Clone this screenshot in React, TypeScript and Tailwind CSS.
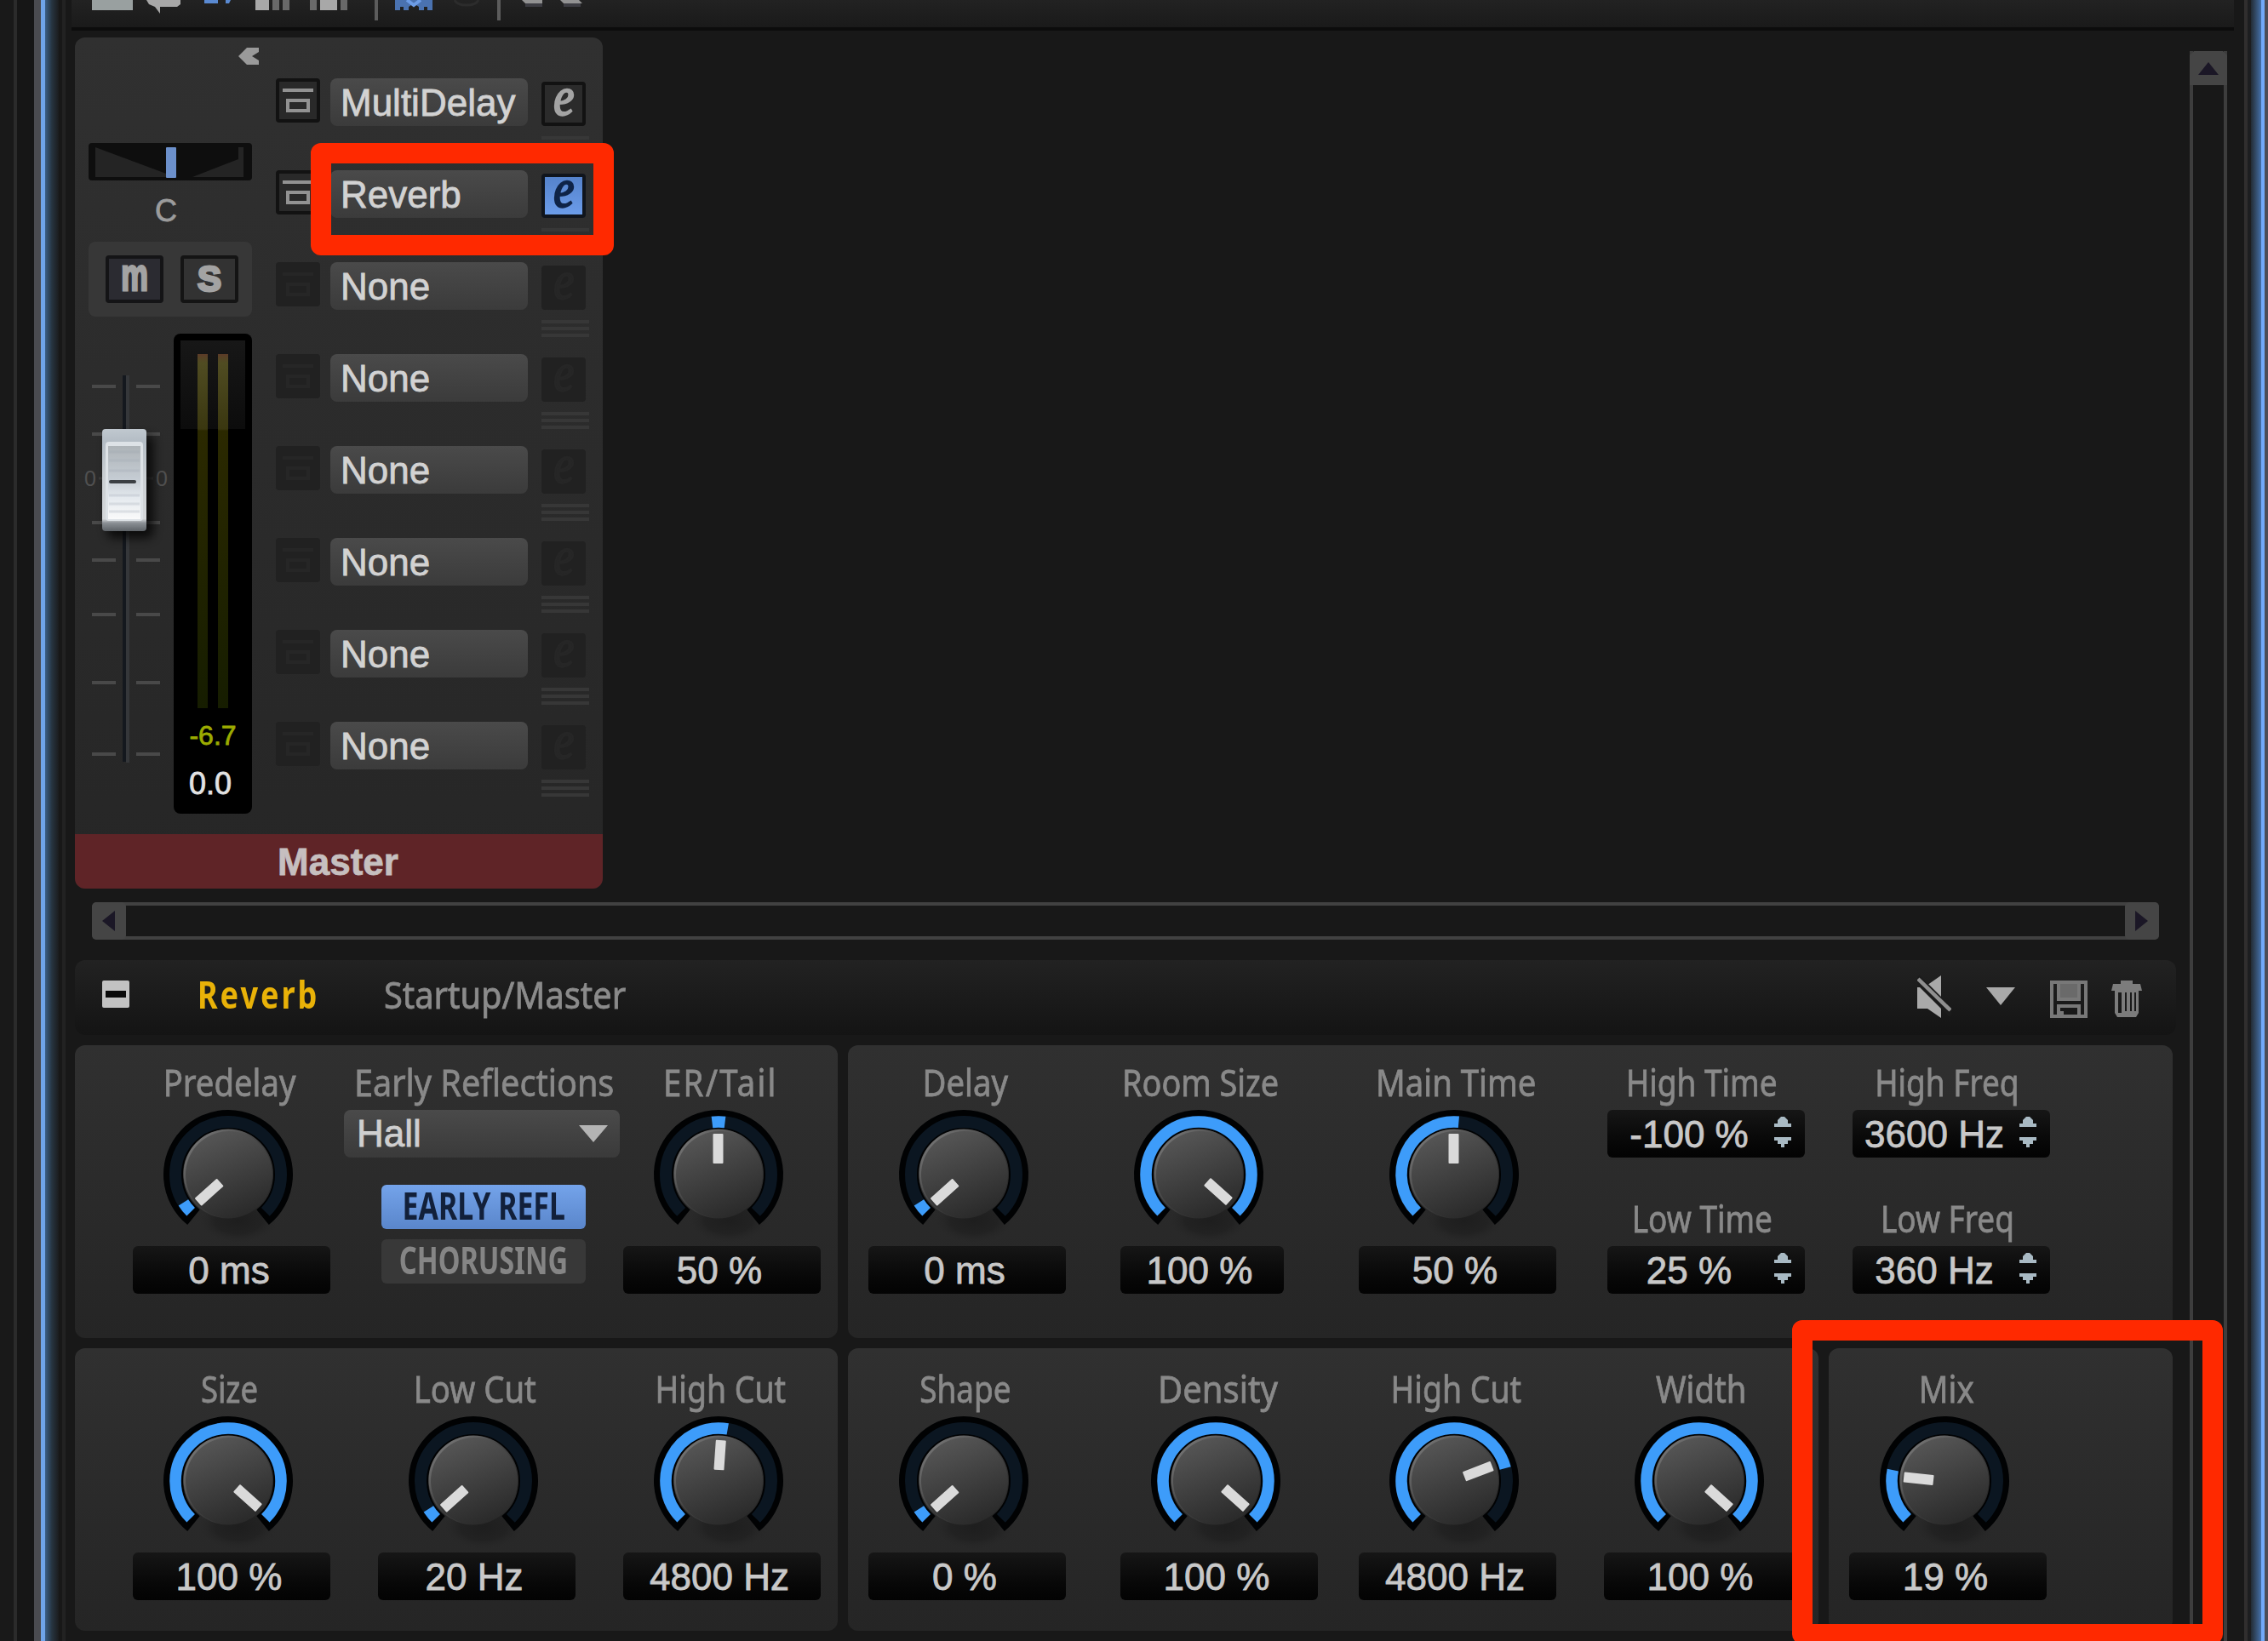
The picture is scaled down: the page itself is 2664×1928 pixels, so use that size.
import clsx from 'clsx'

type KnobProps = {
  angle: number
  from?: number
  to: number
}

const point = (radius: number, angle: number) => {
  const rad = (angle * Math.PI) / 180
  return `${(radius * Math.sin(rad)).toFixed(2)} ${(-radius * Math.cos(rad)).toFixed(2)}`
}

const arc = (radius: number, from: number, to: number) =>
  `M ${point(radius, from)} A ${radius} ${radius} 0 ${to - from > 180 ? 1 : 0} 1 ${point(radius, to)}`

function Knob({ angle, from = -135, to }: KnobProps) {
  return (
    <svg className="block h-[166px] w-[166px]" viewBox="-83 -82 166 166" fill="none">
      <ellipse cx="12" cy="54" rx="46" ry="26" fill="url(#knob-shadow)" />
      <path d={arc(64.5, -141, 141)} stroke="#010203" strokeWidth="23" />
      <path d={arc(62, -135, 135)} stroke="#0b1621" strokeWidth="14" />
      <path d={arc(62, from, to)} stroke="#3d9cfa" strokeWidth="13.5" />
      <circle cx="0" cy="-1" r="52.5" fill="url(#knob-rim)" />
      <circle cx="1" cy="0" r="51" fill="url(#knob-body)" />
      <rect x="-6.5" y="-48" width="12" height="35" rx="1" fill="#dadada" transform={`rotate(${angle})`} />
    </svg>
  )
}

function Defs() {
  return (
    <svg className="absolute h-0 w-0">
      <defs>
        <linearGradient id="knob-body" x1="0.2" y1="0" x2="0.6" y2="1">
          <stop offset="0" stopColor="#585858" />
          <stop offset="0.5" stopColor="#414141" />
          <stop offset="1" stopColor="#2a2a2a" />
        </linearGradient>
        <linearGradient id="knob-rim" x1="0.1" y1="0.1" x2="0.8" y2="0.8">
          <stop offset="0" stopColor="#777777" />
          <stop offset="0.5" stopColor="#444444" />
          <stop offset="1" stopColor="#282828" />
        </linearGradient>
        <radialGradient id="knob-shadow">
          <stop offset="0" stopColor="#1e1e1e" />
          <stop offset="0.6" stopColor="#222222" />
          <stop offset="1" stopColor="#272727" stopOpacity="0" />
        </radialGradient>
      </defs>
    </svg>
  )
}

type LabelProps = { children: string; className?: string; textClass?: string }

function Label({ children, className = 'pr-1', textClass = 'scale-x-[0.87]' }: LabelProps) {
  return (
    <div
      className={clsx(
        'flex h-[54px] items-center justify-center whitespace-pre font-["Noto_Sans",sans-serif] text-[44px] leading-[54px] text-[#898989] [-webkit-text-stroke:0.8px_currentColor]',
        className
      )}
    >
      <span className={textClass}>{children}</span>
    </div>
  )
}

function Value({ children }: { children: string }) {
  return (
    <div className="flex h-14 items-center justify-center rounded-md bg-linear-to-b from-[#161616] to-[#030303] pt-0.5 pr-1.5 text-[44px] leading-14 text-[#c8c8c8] [-webkit-text-stroke:0.8px_currentColor]">
      {children}
    </div>
  )
}

type ControlProps = KnobProps & { label: string; value: string; narrow?: boolean; textClass?: string }

function Control({ label, value, narrow, textClass, ...knob }: ControlProps) {
  return (
    <div className={clsx('shrink-0', narrow ? 'w-48' : 'w-58')}>
      <Label textClass={textClass}>{label}</Label>
      <div className="flex justify-center pr-2">
        <Knob {...knob} />
      </div>
      <Value>{value}</Value>
    </div>
  )
}

function SpinField({ label, value }: { label: string; value: string }) {
  return (
    <div>
      <Label className="pr-2.5" textClass="scale-x-[0.84]">
        {label}
      </Label>
      <div className="mt-1.5 flex h-14 rounded-md bg-linear-to-b from-[#161616] to-[#030303] text-[44px] leading-[58px] text-[#c8c8c8] [-webkit-text-stroke:0.8px_currentColor]">
        <span className="w-48 text-center">{value}</span>
        <svg className="mt-2 ml-1 h-9 w-5" viewBox="0 0 20 36" fill="#a9bac4">
          <path d="M8 0h4l4 4v4h4v4H0V8h4V4z" />
          <path d="M0 24h20v4h-4v4h-4v4H8v-4H4v-4H0z" />
        </svg>
      </div>
    </div>
  )
}

function Panel({ children, className }: { children: React.ReactNode; className: string }) {
  return <div className={clsx('flex rounded-xl bg-linear-to-b from-[#303030] to-[#252525]', className)}>{children}</div>
}

function BypassButton({ on }: { on: boolean }) {
  return (
    <div className={clsx('h-[52px] w-[52px] rounded-sm', on ? 'border-4 border-[#121212] bg-[#292929]' : 'bg-[#212121] p-1')}>
      <svg className="block h-11 w-11" viewBox="0 0 44 44" fill="none" stroke={on ? '#929292' : '#262626'} strokeWidth="4">
        <path d="M4 10h36M10 22h24v12H10z" />
      </svg>
    </div>
  )
}

function EditButton({ state }: { state: 'on' | 'active' | 'off' }) {
  return (
    <div
      className={clsx(
        'mt-1 flex h-[52px] w-[52px] items-center justify-center rounded-sm font-["Liberation_Serif",serif] text-[64px] leading-[44px] italic',
        state === 'on' && 'border-4 border-[#121212] bg-[#2b2b2b] text-[#a4a4a4]',
        state === 'active' && 'border-4 border-[#10151d] bg-linear-to-b from-[#5583cc] to-[#6b9cea] text-[#0f2448]',
        state === 'off' && 'bg-[#212121] text-[#262626]'
      )}
    >
      <span className="-translate-y-[8px] scale-x-[0.85] [-webkit-text-stroke:2.5px_currentColor]">e</span>
    </div>
  )
}

const slots: { name: string; state: 'on' | 'active' | 'off' }[] = [
  { name: 'MultiDelay', state: 'on' },
  { name: 'Reverb', state: 'active' },
  { name: 'None', state: 'off' },
  { name: 'None', state: 'off' },
  { name: 'None', state: 'off' },
  { name: 'None', state: 'off' },
  { name: 'None', state: 'off' },
  { name: 'None', state: 'off' },
]

function InsertSlots() {
  return (
    <div className="ml-7 pt-12">
      {slots.map((slot, i) => (
        <div key={i} className="flex h-27">
          <BypassButton on={slot.state !== 'off'} />
          <div className="ml-3 h-14 w-58 rounded-lg bg-linear-to-b from-[#4a4a4a] to-[#3b3b3b] pl-3 text-[44px] leading-[58px] text-[#d2d2d2] [-webkit-text-stroke:0.8px_currentColor]">
            {slot.name}
          </div>
          <div className="ml-4">
            <EditButton state={slot.state} />
            <div className="mt-3 flex w-14 flex-col gap-1">
              <div className="h-1 bg-[#373737]" />
              <div className="h-1 bg-[#373737]" />
              <div className="h-1 bg-[#373737]" />
            </div>
          </div>
        </div>
      ))}
    </div>
  )
}

function Fader() {
  return (
    <svg className="-ml-1 h-[564px] w-26 overflow-visible" viewBox="100 392 104 564">
      <defs>
        <linearGradient id="cap" x1="0" y1="0" x2="0" y2="1">
          <stop offset="0" stopColor="#c0c8cf" />
          <stop offset="0.12" stopColor="#b4bdc5" />
          <stop offset="0.45" stopColor="#c9ced2" />
          <stop offset="0.88" stopColor="#d5d8da" />
          <stop offset="0.92" stopColor="#8b9095" />
          <stop offset="1" stopColor="#5d6267" />
        </linearGradient>
        <linearGradient id="cap-face" x1="0" y1="0" x2="0" y2="1">
          <stop offset="0" stopColor="#aeb4b8" />
          <stop offset="0.45" stopColor="#c5ccd3" />
          <stop offset="0.7" stopColor="#e4e9ee" />
          <stop offset="1" stopColor="#fafafa" />
        </linearGradient>
      </defs>
      <rect x="144" y="441" width="4" height="454" fill="#14181e" />
      <rect x="148" y="441" width="4" height="455" fill="#35373a" />
      {[454, 510, 614, 658, 722, 802, 886].map((y) => (
        <path key={y} d={`M108 ${y}h28M160 ${y}h28`} stroke="#494949" strokeWidth="4" />
      ))}
      <path d="M116 562h64" stroke="#3a3a3a" strokeWidth="3" />
      <g fill="#505050" fontSize="25" fontFamily="Liberation Sans, sans-serif" textAnchor="middle">
        <text x="106" y="571">0</text>
        <text x="190" y="571">0</text>
      </g>
      <rect x="126" y="512" width="54" height="120" rx="6" fill="#000" opacity="0.75" className="blur-[6px]" />
      <rect x="120" y="504" width="52" height="120" rx="4" fill="url(#cap)" />
      <rect x="124" y="519" width="44" height="93" rx="4" fill="#dde2e6" />
      <rect x="127" y="524" width="38" height="86" fill="url(#cap-face)" />
      <path
        d="M128 531h36M128 541h36M128 553h36M128 582h36M128 592h36M128 601h36"
        stroke="#9aa5ae"
        strokeOpacity="0.25"
        strokeWidth="3"
      />
      <rect x="128" y="564" width="32" height="4" rx="2" fill="#3c4044" />
    </svg>
  )
}

function Meter() {
  return (
    <div className="flex h-[564px] w-23 flex-col rounded-lg bg-black text-center">
      <div className="mx-2 mt-2 flex h-[432px] justify-center gap-3 bg-[linear-gradient(#171717,#0c0c0c_104px,#000_104px)] pt-4">
        <div className="w-3 bg-[linear-gradient(#5c3c28,#504c22_10px,#3a3710_88px,#2b2900_90px,#161d00)]" />
        <div className="w-3 bg-[linear-gradient(#5c3c28,#504c22_10px,#3a3710_88px,#2b2900_90px,#161d00)]" />
      </div>
      <div className="mt-2 h-12 text-[32px] leading-12 text-[#9cab00] [-webkit-text-stroke:0.8px_currentColor]">-6.7</div>
      <div className="mt-2 mr-2 h-12 pl-0.5 text-[36px] leading-[50px] text-[#e2e2e2] [-webkit-text-stroke:0.8px_currentColor]">0.0</div>
    </div>
  )
}

function ChannelStrip() {
  return (
    <div className="h-[1000px] w-155 overflow-hidden rounded-xl bg-linear-to-b from-[#303030] to-[#262626]">
      <div className="flex h-[936px] pl-4">
        <div className="w-48">
          <div className="flex h-[124px] justify-end">
            <svg className="mt-3 -mr-2 h-5 w-6" viewBox="0 0 24 20" fill="#9a9a9a">
              <path d="M0 10 10 0h14v5l-8 5 8 5v5H10z" />
            </svg>
          </div>
          <svg className="block h-11 w-48" viewBox="0 0 192 44">
            <rect width="192" height="44" rx="4" fill="#0e0e0e" />
            <path d="M8 5v35h174V5h-6v14l-54 21h-20z" fill="#242424" />
            <rect x="91" y="5" width="12" height="36" rx="1" fill="#6c90cb" />
          </svg>
          <div className="mt-3 h-12 pr-2.5 text-center text-[36px] leading-12 text-[#9c9c9c] [-webkit-text-stroke:0.8px_currentColor]">C</div>
          <div className="mt-3 flex h-22 items-center justify-center gap-5 rounded-lg bg-[#373737] pl-1 font-bold text-[#a3a3a3]">
            <div className="flex h-14 w-17 items-center justify-center rounded-sm border-4 border-[#141416] bg-[#2b2b31] text-[54px] leading-none">
              <span className="-translate-y-[6px] scale-x-[0.66] [-webkit-text-stroke:3px_currentColor]">m</span>
            </div>
            <div className="flex h-14 w-17 items-center justify-center rounded-sm border-4 border-[#141414] bg-[#323232] text-[42px] leading-none">
              <span className="[-webkit-text-stroke:3px_currentColor]">S</span>
            </div>
          </div>
          <div className="mt-5 flex">
            <Fader />
            <Meter />
          </div>
        </div>
        <InsertSlots />
      </div>
      <div className="h-16 bg-[#5f2427] pr-0.5 text-center text-[44px] leading-[66px] font-bold text-[#c6bfbf] [-webkit-text-stroke:0.8px_currentColor]">
        Master
      </div>
    </div>
  )
}

function Toolbar() {
  return (
    <div className="h-9 w-[2540px] border-b-4 border-[#0c0c0c] bg-linear-to-b from-[#222222] to-[#1a1a1a]">
      <svg className="block h-8 w-[640px]" viewBox="84 0 640 32">
        <rect x="108" y="0" width="48" height="12" fill="#99a0a0" />
        <path d="M172 0h40v5l-4 3h-20v8l-6-8-7-3z" fill="#a8a8a8" />
        <path d="M240 0h16v4h-16zM265 0h6l-2 4h-4z" fill="#5a8ad2" />
        <path d="M300 0h16v12h-16zM376 0h20v12h-20z" fill="#a8a8a8" />
        <path d="M320 0h8v12h-8zM332 0h8v12h-8zM364 0h8v12h-8zM400 0h8v12h-8z" fill="#696969" />
        <path d="M440 0h4v24h-4zM584 0h4v24h-4z" fill="#5c5c5c" />
        <path d="M464 0h44v12h-6V8h-4v4h-6V8l-6-4-6 4v4h-6V8h-4v4h-6z" fill="#4a72b0" />
        <path d="M478 0l8 6 8-6" fill="none" stroke="#6c9ce6" strokeWidth="4" />
        <path d="M534 0c4 8 24 8 28 0" fill="none" stroke="#2c2c2c" strokeWidth="3" />
        <path d="M613 0h24v4h-20zM658 0h22l4 4h-22z" fill="#929292" />
        <path d="M617 4h20v4h-20zM662 4h20v4h-20z" fill="#3c3c42" />
      </svg>
    </div>
  )
}

function HorizontalScrollbar() {
  return (
    <div className="mt-4 ml-5 flex h-11 w-[2428px] justify-between rounded-md border-y-4 border-[#414141]">
      <svg className="-my-1 h-11 w-10" viewBox="0 0 40 44">
        <rect width="40" height="44" rx="5" fill="#454545" />
        <path d="M12 22 27 10v24z" fill="#1b1726" />
      </svg>
      <svg className="-my-1 h-11 w-10" viewBox="0 0 40 44">
        <rect width="40" height="44" rx="5" fill="#454545" />
        <path d="M27 22 12 10v24z" fill="#1b1726" />
      </svg>
    </div>
  )
}

function EffectHeader() {
  return (
    <div className="mt-6 flex h-22 w-[2468px] rounded-xl bg-linear-to-b from-[#222222] to-[#141414] font-['Noto_Sans',sans-serif] text-[44px] leading-[80px] whitespace-pre">
      <div className="mt-6 ml-8 flex h-8 w-8 items-center justify-center rounded-xs bg-[#c2c2c2]">
        <div className="h-2 w-6 bg-[#0a0a0a]" />
      </div>
      <div className="ml-20 w-[219px]">
        <span className="inline-block origin-left scale-x-[0.82] font-bold tracking-[3.6px] text-[#e9b208]">Reverb</span>
      </div>
      <div className="flex-1">
        <span className="inline-block origin-left scale-x-[0.905] text-[#8b8b8b] [-webkit-text-stroke:0.8px_currentColor]">Startup/Master</span>
      </div>
      <div className="mt-4 mr-10 flex">
        <svg className="h-14 w-10" viewBox="0 0 40 56">
          <path d="M0 16h8L28 2v50L12 41H0z" fill="#a9a9a9" />
          <path d="M-1 5 41 47" stroke="#1b1b1b" strokeWidth="10" />
          <path d="M1 6 39 43" stroke="#8f8f8f" strokeWidth="4.5" />
        </svg>
        <svg className="ml-10 h-14 w-9" viewBox="0 0 36 56">
          <path d="M1 16h34L18 37z" fill="#a9a9a9" />
        </svg>
        <svg className="ml-10 h-14 w-11" viewBox="0 0 44 56" fill="none" stroke="#787878" strokeWidth="4">
          <path d="M2 10h40v40H2z" />
          <path d="M10 10v20h24V10z" fill="#6a6a6a" />
          <path d="M10 50V38h24v12" />
          <path d="M12 44h4v4h-4z" fill="#787878" stroke="none" />
        </svg>
        <svg className="ml-7 h-14 w-9" viewBox="0 0 36 56" fill="#7c7c7c">
          <path d="M11 8h14v4h9l2 8H0l2-8h9z" />
          <path d="M4 20h28v26l-3 5H7l-3-5zM8 22v24h4V22zM16 22v22h2V22zM22 22v22h2V22zM27 22v22h2V22z" fillRule="evenodd" />
        </svg>
      </div>
    </div>
  )
}

function EffectPanels() {
  return (
    <div className="mt-3 flex flex-col gap-3">
      <div className="flex gap-3">
        <Panel className="h-[344px] w-224 pt-4 pl-17">
          <Control label="Predelay" value="0 ms" angle={-132} to={-122} />
          <div className="ml-4 w-81 shrink-0">
            <div className="flex justify-center pl-1.5">
              <Label className="" textClass="scale-x-[0.9]">
                Early Reflections
              </Label>
            </div>
            <div className="mt-1.5 flex h-14 items-center justify-between rounded-lg bg-linear-to-b from-[#4a4a4a] to-[#3a3a3a] pr-3.5 pl-[15px] text-[44px] leading-14 text-[#cfcfcf] [-webkit-text-stroke:0.8px_currentColor]">
              Hall
              <svg className="h-5 w-[34px]" viewBox="0 0 34 20" fill="#b4b4b4">
                <path d="M0 0h34L17 20z" />
              </svg>
            </div>
            <div className="mt-8 ml-11 flex w-60 flex-col gap-3 text-center font-['Noto_Sans',sans-serif] text-[44px] font-bold leading-[48px] whitespace-nowrap">
              <div className="flex h-[52px] justify-center rounded-md bg-linear-to-b from-[#74a3ea] to-[#5a86cb] text-[#12203a]">
                <span className="scale-x-[0.77]">EARLY REFL</span>
              </div>
              <div className="flex h-[52px] justify-center rounded-md bg-[#383838] text-[#858585]">
                <span className="scale-x-[0.74]">CHORUSING</span>
              </div>
            </div>
          </div>
          <div className="ml-1">
            <Control label="ER/Tail" value="50 %" angle={0} from={-7} to={7} textClass="scale-x-[0.87] tracking-[2.6px]" />
          </div>
        </Panel>
        <Panel className="h-[344px] w-[1556px] pt-4 pl-6">
          <Control label="Delay" value="0 ms" angle={-132} to={-122} />
          <div className="ml-16">
            <Control label="Room Size" value="100 %" angle={132} to={135} narrow textClass="scale-x-[0.86]" />
          </div>
          <div className="ml-22">
            <Control label="Main Time" value="50 %" angle={0} to={5} />
          </div>
          <div className="ml-15 flex w-58 flex-col gap-11">
            <SpinField label="High Time" value="-100 %" />
            <SpinField label="Low Time" value="25 %" />
          </div>
          <div className="ml-14 flex w-58 flex-col gap-11">
            <SpinField label="High Freq" value="3600 Hz" />
            <SpinField label="Low Freq" value="360 Hz" />
          </div>
        </Panel>
      </div>
      <div className="flex gap-3">
        <Panel className="h-83 w-224 gap-14 pt-5 pl-17">
          <Control label="Size" value="100 %" angle={132} to={135} textClass="scale-x-[0.83]" />
          <Control label="Low Cut" value="20 Hz" angle={-132} to={-122} />
          <Control label="High Cut" value="4800 Hz" angle={4} to={10} textClass="scale-x-[0.85]" />
        </Panel>
        <Panel className="h-83 w-285 pt-5 pl-6">
          <Control label="Shape" value="0 %" angle={-132} to={-122} textClass="scale-x-[0.84]" />
          <div className="ml-16">
            <Control label="Density" value="100 %" angle={132} to={135} textClass="scale-x-[0.91]" />
          </div>
          <div className="ml-12">
            <Control label="High Cut" value="4800 Hz" angle={69} to={76} textClass="scale-x-[0.85]" />
          </div>
          <div className="ml-14">
            <Control label="Width" value="100 %" angle={132} to={135} />
          </div>
        </Panel>
        <Panel className="h-83 w-101 pt-5 pl-6">
          <Control label="Mix" value="19 %" angle={-84} to={-78} />
        </Panel>
      </div>
    </div>
  )
}

export default function App() {
  return (
    <div className="relative flex h-[1928px] w-[2664px] overflow-hidden bg-[#181818] font-['Liberation_Sans',Arial,sans-serif]">
      <Defs />

      {/* left window edge */}
      <div className="flex w-21 shrink-0">
        <div className="w-4 bg-[#191919]" />
        <div className="w-1 bg-[#2b2b2b]" />
        <div className="w-5 bg-[#161616]" />
        <div className="w-2 bg-[#4a4b50]" />
        <div className="w-[5px] bg-[#6fa4ea]" />
        <div className="w-4 bg-linear-to-r from-[#3b5f88] via-[#263440] to-[#1b1c1e]" />
        <div className="w-1" />
        <div className="w-1 bg-[#222222]" />
      </div>

      <div className="w-[2540px] shrink-0">
        <Toolbar />
        <div className="flex h-[1892px]">
          <div className="w-[2488px] shrink-0 pt-2 pl-1">
            <ChannelStrip />
            <HorizontalScrollbar />
            <EffectHeader />
            <EffectPanels />
          </div>
          <div className="mt-6 w-11 border-x-4 border-[#3d3d3d]">
            <svg className="-ml-1 h-10 w-11 max-w-none" viewBox="0 0 44 40">
              <path d="M0 40V5l5-5h34l5 5v35z" fill="#454545" />
              <path d="M22 13 34 28H10z" fill="#1b1726" />
            </svg>
          </div>
        </div>
      </div>

      {/* right window edge */}
      <div className="flex w-10 shrink-0">
        <div className="w-3" />
        <div className="w-1 bg-[#302e2e]" />
        <div className="w-1 bg-[#1d1e20]" />
        <div className="w-3 bg-linear-to-r from-[#232c35] to-[#4470a8]" />
        <div className="w-1 bg-[#72a9f8]" />
        <div className="w-1 bg-[#4c4c56]" />
      </div>

      {/* highlights */}
      <div className="absolute top-[168px] left-[365px] h-[132px] w-[356px] rounded-xl border-[24.5px] border-[#ff2900]" />
      <div className="absolute top-[1551px] left-[2105px] h-[381px] w-[506px] rounded-xl border-[24.5px] border-[#ff2900]" />
    </div>
  )
}
